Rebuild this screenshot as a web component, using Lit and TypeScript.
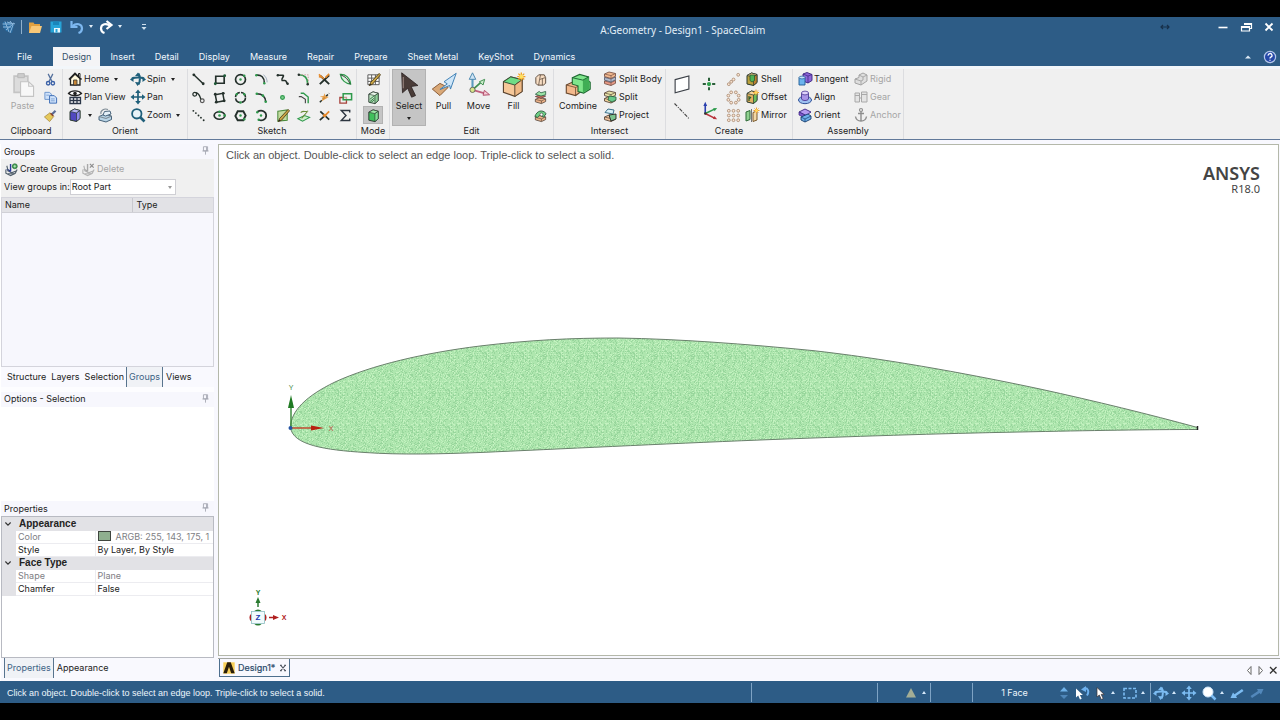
import { LitElement, html, svg, css } from "lit";
import { customElement, property } from "lit/decorators.js";
import { classMap } from "lit/directives/class-map.js";

const K = "#24302b";
const G = "#2f9a4c";
const T = "#1f5f7a";

const cube = (a: string, b: string, c: string) => svg`
  <path d="M3 4.500 7.500 2 13 3.500v8L9.500 14.500 3 13Z" fill=${b} stroke="#2a3a30" stroke-linejoin="round"/>
  <path d="M3 4.500 9.500 6 13 3.500 7.500 2Z" fill=${a} stroke="#2a3a30" stroke-width=".7"/>
  <path d="M9.500 6 13 3.500v8L9.500 14.500Z" fill=${c} stroke="#2a3a30" stroke-width=".7"/>`;

const slab = (y: number, fill: string, line = "#5b4a3c") => svg`
  <path d=${`M2.5 ${y + 2} 7 ${y} 13.5 ${y + 1.5}v2.8L9 ${y + 6.5} 2.5 ${y + 4.6}Z`} fill=${fill} stroke=${line} stroke-width=".9" stroke-linejoin="round"/>
  <path d=${`M2.5 ${y + 2} 9 ${y + 3.6} 13.5 ${y + 1.5}M9 ${y + 3.6}v2.7`} fill="none" stroke=${line} stroke-width=".7"/>`;

const dots = (pts: number[][], c = K, r = 1.1) =>
  pts.map(([x, y]) => svg`<circle cx=${x} cy=${y} r=${r} fill=${c}/>`);

const rings = (pts: number[][]) =>
  pts.map(([x, y]) => svg`<circle cx=${x} cy=${y} r="1.500" fill="#fbe6d4" stroke="#a98a72" stroke-width=".9"/>`);

const pencil = svg`<path d="M14 1.500 5 11l-1.500 3.500L7 13l8.500-10Z" fill="#c9a544" stroke="#4b3a18" stroke-width=".9"/><path d="m3.500 14.500 1-2.300 1.300 1.200Z" fill="#222"/>`;

const spark = (x: number, y: number) => svg`<path d=${`M${x - 3} ${y}h6M${x} ${y - 3}v6M${x - 2} ${y - 2}l4 4M${x + 2} ${y - 2}l-4 4`} stroke="#f0a030" stroke-width="1"/><circle cx=${x} cy=${y} r="1.500" fill="#ffd860"/>`;

const hand = (c: string, tail: string) => svg`
  <path d="M2 8v4l5 2.500 5-2.500 2-4M4 9l4 2.500 5-2" fill="none" stroke=${c} stroke-width="1.200"/>
  <path d="M7 2v8M7 10 3 7.500" fill="none" stroke=${tail} stroke-width="1.500"/><path d="M3 4l1.500 6M4 12.500h7" fill="none" stroke=${c} stroke-width="1.200"/>`;

const spinShape = (c: string) => svg`
  <path d="M2 7.500c3-1.500 9-1.500 12 0M8.500 2.500c1.800 3 1.800 8 0 11" fill="none" stroke=${c} stroke-width="2"/>
  <path d="M5 5 8 1.500 10.500 5ZM5 11l2.500 4 3-3.500Z" fill=${c}/><path d="m0 8.500 3.500-3v5.500ZM16 8.500l-3.500-3v5.500Z" fill=${c}/>`;

const panShape = (c: string) => svg`
  <path d="M8 3v10M3 8h10" stroke=${c} stroke-width="1.700"/>
  <path d="M8 .500 10.800 4H5.200ZM8 15.500 5.200 12h5.600ZM.500 8 4 5.200v5.600ZM15.500 8 12 10.800V5.200Z" fill=${c}/>`;

const ICONS: Record<string, unknown> = {
  app: svg`<path d="M2 3h8l3 3-2 8-6-2-3-4Z" fill="#2a6da3"/><path d="M1.500 5h9M2 8h8M4 2.500 8 13M9 2l3 4-3 8M5 11l7-6M6 3l7 2M12 4l2 1" fill="none" stroke="#8db8dc" stroke-width="1"/>`,
  open: svg`<path d="M2 3.500h4.500l1 1.500H13v9H2Z" fill="#e0a040"/><path d="M4.500 7H15l-2 7H2Z" fill="#f8c878"/>`,
  save: svg`<path d="M2.500 2.500h11v11h-11Z" fill="#27a4d8"/><path d="M5 2.500h6v3.500H5Z" fill="#1a86bb"/><path d="M6 9h6v4.500H6Z" fill="#e8f6fc"/><path d="M7.500 10h2v3.500h-2Z" fill="#27a4d8"/>`,
  undo: svg`<path d="M3.500 7c4-3.500 9.500-2 9.500 2.500 0 2.500-1.500 3.800-3.500 4.500" fill="none" stroke="#7db8f0" stroke-width="2.200"/><path d="M2.500 2v6h6" fill="none" stroke="#7db8f0" stroke-width="2.200"/>`,
  redo: svg`<path d="M12.500 7C8.500 3.500 3 5 3 9.500 3 12 4.500 13.300 6.500 14" fill="none" stroke="#fff" stroke-width="2.200"/><path d="M8.500 2 13.500 6 8.500 10" fill="none" stroke="#fff" stroke-width="2.200"/>`,
  more: svg`<path d="M6 5.500h4" stroke="#cfe0ee" stroke-width="1"/><path d="M5.500 8h5L8 11Z" fill="#cfe0ee"/>`,
  minimize: svg`<path d="M3.500 8.500h9" stroke="#fff" stroke-width="1.600"/>`,
  restore: svg`<path d="M6 4.500h7.500v5H12" fill="none" stroke="#fff" stroke-width="1.200"/><path d="M6 4h8v2H6Z" fill="#fff"/><path d="M3.500 7.500h8V12h-8Z" fill="#2d5c86" stroke="#fff" stroke-width="1.200"/><path d="M3 7h9v2H3Z" fill="#fff"/>`,
  close: svg`<path d="m4.500 4.500 7 7M11.500 4.500l-7 7" stroke="#fff" stroke-width="1.800"/>`,
  arrows: svg`<path d="M4 8h8M6 6 4 8l2 2M10 6l2 2-2 2" fill="none" stroke="#17304a" stroke-width="1.200"/>`,
  collapse: svg`<path d="M5 9.500 8 6.500l3 3Z" fill="#dce9f5"/>`,
  help: svg`<circle cx="8" cy="8" r="5.600" fill="#2548a8" stroke="#b5c8ea" stroke-width="1.200"/><path d="M6.200 6.600a1.900 1.900 0 1 1 2.600 1.600q-.8.400-.8 1.300M8 10.800v1" fill="none" stroke="#fff" stroke-width="1.300"/>`,
  paste: svg`<path d="M2.500 2.500h8.500v10H2.500Z" fill="#dcdcdc" stroke="#c4c4c4"/><path d="M4.800 1h4v2.500h-4Z" fill="#cccccc" stroke="#b8b8b8" stroke-width=".6"/><path d="M6.500 6h5l3 2.800v6.200h-8Z" fill="#f8f8f8" stroke="#c4c4c4" stroke-width=".7"/><path d="M11.500 6v2.800h3" fill="none" stroke="#c4c4c4" stroke-width=".7"/>`,
  cut: svg`<path d="M5.500 2 9.500 10M10.500 2 6.500 10" stroke="#54709c" stroke-width="1.300"/><circle cx="5.500" cy="12" r="1.800" fill="none" stroke="#3c62a8" stroke-width="1.500"/><circle cx="10.500" cy="12" r="1.800" fill="none" stroke="#3c62a8" stroke-width="1.500"/>`,
  copy: svg`<path d="M2 2.500h5l2 2V10H2Z" fill="#cfe2fa" stroke="#6b94cc"/><path d="M7 6h5l2.500 2.500v5.500H7Z" fill="#cfe2fa" stroke="#3a6bb4"/><path d="M8.500 9.500h4M8.500 11.500h4M3.500 5.500h3" stroke="#6b94cc" stroke-width=".8"/>`,
  brush: svg`<path d="m12.500 2 1.700 1.700-4 4L8.500 6Z" fill="#5a6c96"/><path d="m7.500 5 4 4-4.500 5.500L1.500 9.500Z" fill="#e6c95c" stroke="#9c7b2a" stroke-width=".7"/><path d="m8 5.500 3 3" stroke="#8a4632" stroke-width="1.600"/>`,
  home: svg`<path d="M3.500 7.500v6.500h9.500V7.500L8 3Z" fill="#fff8dc" stroke="#222" stroke-width="1.300"/><path d="M2 8.500 8 2.500l6.500 6" fill="none" stroke="#222" stroke-width="1.700"/><path d="M11.500 5V2.500h1.500V6" fill="none" stroke="#222"/><path d="M6.500 9h3.500v5H6.500Z" fill="#c98735" stroke="#333" stroke-width=".8"/>`,
  plan: svg`<path d="M1.500 4.500c3-3.500 10-3.500 13 0-3 3-10 3-13 0Z" fill="#fff" stroke="#222" stroke-width="1.300"/><circle cx="8" cy="4.500" r="1.800" fill="#222"/><path d="M3 8.500h10.500V14.500H3ZM6.500 8.500v6M10 8.500v6M3 11.500h10.500" fill="#fff" stroke="#2b3648" stroke-width="1.300"/>`,
  orientcube: cube("#b6b3f6", "#5148c0", "#8f89ec"),
  turn: svg`<path d="M2 9.500 8 7l6.500 2v3.500L9 15l-7-2Z" fill="#b8d4e6" stroke="#39566e" stroke-width=".9"/><path d="M6 8 7.500 4.500 13 4 14 7 8.500 9Z" fill="#e4f0f8" stroke="#39566e" stroke-width=".9"/><path d="M2 9.500 9 11.500l5.500-2.500M4 7c-1-3 3-6 7-4.500" fill="none" stroke="#7d8a94" stroke-width="1.100"/>`,
  spin: spinShape(T),
  pan: panShape(T),
  zoom: svg`<circle cx="6.800" cy="6.800" r="4.700" fill="#e8f3f8" stroke=${T} stroke-width="1.800"/><path d="m10 10 4.500 4.500" stroke=${T} stroke-width="2.600"/>`,

  line: svg`<path d="m3 3 10 9.500" stroke=${K} stroke-width="1.600"/>${dots([[3, 3], [13, 12.5]], K, 1.5)}`,
  rect: svg`<path d="M4 4.500h9v7.500H4Z" fill="none" stroke=${K} stroke-width="1.800"/>${dots([[3.500, 12.500], [13.500, 4]], "#1f5a38", 1.5)}`,
  circle: svg`<circle cx="8" cy="8" r="5.300" fill="none" stroke=${K} stroke-width="1.800"/>${dots([[8, 8], [12, 4]], G, 1.3)}`,
  tarc: svg`<path d="M2 3.500c6-1 9 2.500 9 8" fill="none" stroke=${K} stroke-width="1.700"/><path d="M10 3c3 2 4 5 4 8" fill="none" stroke="#9ab" stroke-width="1"/>${dots([[2.500, 3.500], [11, 12]], G, 1.3)}`,
  spline: svg`<path d="M3 3.500h5.500c2 .500-2.500 4-1 5.500h3c2 0 1.500 3 3 3.500" fill="none" stroke=${K} stroke-width="1.700"/>${dots([[3, 3.500], [13.500, 12.500]], K, 1.3)}`,
  corner: svg`<path d="M3 3c6 0 9.500 3.500 9.500 10" fill="none" stroke=${G} stroke-width="1.700"/><path d="M3 3h10v10" fill="none" stroke="#c88" stroke-width=".9" stroke-dasharray="1.500 1.500"/>${dots([[3, 3], [12.500, 13]], K, 1.3)}`,
  trim: svg`<path d="m3 13 10-9.500M3.500 4 13 13" stroke=${K} stroke-width="2"/><path d="M2 2.500 7.500 7.500M9 6l4-4M2 5l4 .500" stroke="#e58a2c" stroke-width="1.700"/>`,
  offset: svg`<path d="M2.500 2.500c5-.500 10.500 3.500 11 10.500-5-.500-10-4-11-10.500Z" fill="#dff5e2" stroke=${G} stroke-width="1.300"/><path d="M3 3c5 2 8 5 10 10" fill="none" stroke="#333"/>`,
  tline: svg`<circle cx="4" cy="4.500" r="2" fill="none" stroke=${K} stroke-width="1.300"/><circle cx="12" cy="11.500" r="2" fill="none" stroke="#555" stroke-width="1.300"/><path d="M5 2.800c4 .500 4.500 4 5.500 7" fill="none" stroke=${K} stroke-width="1.500"/>`,
  rect3: svg`<path d="M3.500 5 11.500 3.500l1.500 8-8 1.500Z" fill="none" stroke=${K} stroke-width="1.600"/>${dots([[3.500, 4.500], [12, 3.500], [13, 11.500], [4.500, 13]], K, 1.5)}`,
  circle3: svg`<circle cx="8" cy="8" r="5.300" fill="none" stroke=${K} stroke-width="1.700" stroke-dasharray="7 1.300"/>${dots([[4, 4.500], [12, 4.500], [8, 13.300]], G, 1.3)}`,
  sarc: svg`<path d="M3 4c6 0 9 3 9.500 8.500" fill="none" stroke=${K} stroke-width="1.700"/>${dots([[3, 4], [9.500, 6], [12.500, 12.500]], G, 1.4)}`,
  point: svg`<circle cx="8" cy="8" r="2" fill="#7fd08f" stroke=${G} stroke-width="1.300"/>`,
  offcurve: svg`<path d="M5 3.500h3l5 4V14" fill="none" stroke=${G} stroke-width="1.500"/><path d="M3 7h2.500L10 10v4" fill="none" stroke="#444" stroke-width="1.200"/>`,
  split: svg`<path d="m3 13 10-9.500" stroke=${K} stroke-width="1.600" stroke-dasharray="3 1.500"/><path d="m8 3.500 1 3 3.500 1-2.500 1.500-5 3 1-4-3-1 4-.500Z" fill="#e8983a" opacity=".9"/>`,
  bring: svg`<path d="M2 8h7v6H2Z" fill="none" stroke="#a8433c" stroke-width="1.400"/><path d="M5.500 4h9v6.500h-9Z" fill="#eaf7ec" fill-opacity=".5" stroke=${G} stroke-width="1.600"/>`,
  cline: svg`${dots([[2.5, 3], [5.2, 5.4], [8, 8], [10.6, 10.3], [13.5, 13]], K, 1)}`,
  ellipse: svg`<ellipse cx="8" cy="8" rx="5.700" ry="4" fill="none" stroke=${K} stroke-width="1.800"/>${dots([[8, 8], [13.500, 8], [8, 4]], G, 1.4)}`,
  polygon: svg`<path d="M5 3.500h6L13.500 8l-2.500 5H5L2.500 8.500Z" fill="none" stroke=${K} stroke-width="2"/>${dots([[8, 8], [12, 12]], G, 1.3)}`,
  parc: svg`<path d="M3.500 4c5-3 9.500 0 9.500 4s-4.500 6.500-8 4.500" fill="none" stroke=${K} stroke-width="1.800"/>${dots([[7.500, 8], [3.500, 4.500], [5, 12.500]], G, 1.3)}`,
  facecurve: svg`<path d="M3 3.500 13 2v11L3 14Z" fill="#c4dca0" stroke="#4b8a3c" stroke-width="1.100"/>${pencil}`,
  projsk: svg`<path d="M2 11.500 9 8l5.500 2L7 14Z" fill="#cfeecb" stroke=${G} stroke-width="1.100"/><path d="M5 5c3-3 5 0 8-2M6 11l6-7" fill="none" stroke="#6b8e3a" stroke-width="1.100"/>`,
  extend: svg`<path d="m3 13 6-5.500M3.500 3.500 13 12.500" stroke=${K} stroke-width="1.800"/><path d="m9 7.500 4-4" stroke="#e58a2c" stroke-width="1.800"/>${dots([[8, 8]], "#e58a2c", 1.8)}`,
  sigma: svg`<path d="M12.500 4.800V2.700h-9l5 5.300-5 5.300h9v-2.100" fill="none" stroke="#2c3540" stroke-width="1.500"/>`,

  sketchmode: svg`<path d="M2 3h12v10.500H2ZM2 6.500h12M2 10h12M6 3v10.500M10 3v10.500" fill="#fff" stroke="#555" stroke-width="1"/>${pencil}`,
  sectionmode: svg`${cube("#e8f6ea", "#bfe6c4", "#8ccf98")}<path d="m4 10 5-4M4 12.500l5-4M5 13.500l4-3" stroke="#2f7a40" stroke-width="1"/>`,
  solidmode: cube("#9be8a6", "#3fbf5b", "#7fe094"),

  select: svg`<path d="M3.500.500 13.500 8.300 9.300 8.900 12 14.500 9.600 15.500 7.200 10 4 12.800Z" fill="#4a3c38" stroke="#2a2020" stroke-width=".5"/><path d="M4.500 3v7" stroke="#8d7a74" stroke-width=".8"/>`,
  pull: svg`<path d="M.800 10.500 5.500 7l5 2.500-5 5Z" fill="#d9a877" stroke="#8a5a34" stroke-width=".6"/><path d="M15.500.800 8 6l2 1.300-4.500 3.500 6-2.500.500 2.200Z" fill="#cfe6f8" stroke="#3f7fb4" stroke-width=".6"/>`,
  move: svg`<path d="M4 11V3" stroke="#5b9cc0" stroke-width="1.300"/><path d="M4 .500 6 4.500H2Z" fill="#cfe4f4" stroke="#4a88b0" stroke-width=".6"/><path d="m4 11 5-4.500" stroke="#3f8f50" stroke-width="1.100"/><path d="m11.500 4.500-1 3.500-2.300-2Z" fill="#cdeccb" stroke="#3f8f50" stroke-width=".6"/><path d="m4 11 7 2" stroke="#c0607c" stroke-width="1.200"/><path d="m14.500 14-4 .300.800-3Z" fill="#f6c9d4" stroke="#b04a68" stroke-width=".6"/><circle cx="4" cy="11" r="1.600" fill="#d8e68a" stroke="#555" stroke-width=".5"/>`,
  fill: svg`<path d="M1.500 6 6 3l7 1.800V12L8.500 15 1.500 12.500Z" fill="#f6c89a" stroke="#5c4530" stroke-width=".7"/><path d="M1.500 6 6 3l7 1.800L8.500 8Z" fill="#6fdc86" stroke="#35533b" stroke-width=".6"/><path d="M8.500 8 13 4.800V12L8.500 15Z" fill="#efb985" stroke="#5c4530" stroke-width=".6"/><path d="M12.500.300v5M10 2.800h5M10.700 1l3.600 3.600M14.300 1l-3.600 3.600" stroke="#f0a020" stroke-width=".8"/><circle cx="12.500" cy="2.800" r="1.300" fill="#ffe060"/>`,
  edit1: svg`<path d="M3 6 6 3h6l1.500 3v6L11 14H5L3 12Z" fill="#f6dcc2" stroke="#5b4a3c"/><path d="m8 3-1 5 6-2M7 8l-1 6M10 7v7" fill="none" stroke="#5b4a3c" stroke-width=".8"/>`,
  edit2: svg`${slab(8, "#efb48a")}<path d="m2.500 7 5-2 6 1.500-5 2.500Z" fill="#c86a5a" stroke="#5b3a3c" stroke-width=".8"/><path d="m2.500 4.500 4-3 2 1.500 5-1.500v3.500l-5 1.500Z" fill="#9be3a6" stroke="#35664a" stroke-width=".9"/>`,
  edit3: svg`${slab(8, "#efb48a")}<path d="M2 9c2-6 8-8 12-3l-3 4c-2-3-5-2-6 0Z" fill="#6fcf86" stroke="#2e5f3f"/><circle cx="9" cy="7" r="1.600" fill="#fff" stroke="#333" stroke-width=".6"/>`,
  combine: svg`<path d="M.800 8 5 6l5 2v4l-3.500 2.500-5.700-1.500Z" fill="#f3b98c" stroke="#6b4a30" stroke-width=".7"/><path d="M.800 8 6.500 9.500v5M6.500 9.500 10 8" fill="none" stroke="#6b4a30" stroke-width=".5"/><path d="M4.500 3.500 9 1.500l5.500 1.500v2.500l1 .800v4.200l-4 2.500-3.500-1V8.500L4.500 7.500Z" fill="#7fe68c" stroke="#1f6b33" stroke-width=".7"/><path d="M11 5v7.800l4-2.300V6.300l-.500-3.300Z" fill="#3fae55"/><path d="m4.500 3.500 6.500 1.500 3.500-2" fill="none" stroke="#1f6b33" stroke-width=".6"/>`,
  splitbody: svg`${slab(8, "#e99a86", "#7a5548")}${slab(4.5, "#b5bccb", "#5c6478")}${slab(1, "#f2b98f", "#7a5548")}`,
  splitface: svg`${slab(7.5, "#f2d29a")}${slab(2, "#e8e2a8")}<path d="m7 7 7 1v3l-4 2-4-2Z" fill="#67c98a" stroke="#25583a" stroke-width=".8"/>`,
  project: svg`${slab(8, "#efc09a")}<path d="M3 5.500 6 2l6 1-1 4Z" fill="#d8f0f8" stroke="#3a6f88"/><path d="m7 8 7-1v5l-5 2Z" fill="#7ac48f" stroke="#222" stroke-width=".9"/>`,
  plane: svg`<path d="M2.500 4.500 13.500 1.500v10.500l-11 3Z" fill="#fff" stroke="#3c4148" stroke-width=".9"/>`,
  axis: svg`<path d="m2 2 12 12.500" stroke="#444" stroke-width=".9" stroke-dasharray="3 1 .800 1"/>`,
  cpoint: svg`<circle cx="8" cy="8" r="1.700" fill="#2ea04c"/><path d="M8 3v2.500M8 10.500V13M3 8h2.500M10.500 8H13" stroke="#2b5f3a" stroke-width="1.600"/>`,
  origin: svg`<path d="M5 10V2.500" stroke="#2a3fae" stroke-width="1.300"/><path d="M5 .500 6.500 4H3.500Z" fill="#2a3fae"/><path d="m5 10 7.500-3.500" stroke="#2b9a4a" stroke-width="1.200"/><path d="m14.500 5.500-2 2.600-1.200-2.300Z" fill="#2b9a4a"/><path d="m5 10 7 3.500" stroke="#b8323a" stroke-width="1.300"/><path d="m14.500 14.500-3.400-.200 1.200-2.300Z" fill="#b8323a"/><circle cx="5" cy="10" r="1" fill="#333"/>`,
  plinear: rings([[3, 13], [8, 8], [13, 3], [5.5, 10.5]]),
  pcirc: rings([[5.5, 2.5], [10.5, 2.5], [2.5, 6], [13.5, 6], [2.5, 10.5], [13.5, 10.5], [5.5, 13.5], [10.5, 13.5]]),
  pfill: rings([[3, 3], [8, 3], [13, 3], [3, 8], [8, 8], [13, 8], [3, 13], [8, 13], [13, 13]]),
  shell: svg`${cube("#f0c48a", "#b9a03c", "#b97f2e")}<path d="M6 4h4.500v5.500L8 11 6 9.500Z" fill="#4db356" stroke="#2b5c2f" stroke-width=".8"/>`,
  offsetb: svg`${cube("#f6d9a0", "#e2b060", "#6bbf5a")}<path d="M5 7v5M7 8l-2 2" stroke="#2b5c2f" stroke-width="1.200"/>${spark(12, 3.5)}`,
  mirror: svg`<path d="M2 5 6 3.500v9L2 14Z" fill="#8fd190" stroke="#2f6b38" stroke-width="1"/><path d="m9 5.500 4-1.500v9l-4 1.500Z" fill="#f2d7a6" stroke="#7b5a2c" stroke-width="1"/><path d="M7.500 2v13" stroke="#555" stroke-width=".8"/>${spark(12.5, 3.5)}`,
  tangent: svg`<path d="M6 3 10 1.500l5 2v6L11 12 6 10Z" fill="#8c66d8" stroke="#3b2480" stroke-width=".9"/><path d="m6 3 5 2 4-1.500M11 5v7" fill="none" stroke="#3b2480" stroke-width=".7"/><path d="M2 6.500h6V14H2Z" fill="#6db4ee" stroke="#1f5c94" stroke-width=".9"/><ellipse cx="5" cy="6.500" rx="3" ry="1.400" fill="#c4e2fa" stroke="#1f5c94" stroke-width=".7"/>`,
  align: svg`<ellipse cx="8" cy="11" rx="6.500" ry="3.700" fill="#9dc0f0" stroke="#2d4f96" stroke-width="1"/><path d="M4.500 4v6c1 2 6 2 7 0V4Z" fill="#a994e6" stroke="#4b3a94" stroke-width=".9"/><ellipse cx="8" cy="4" rx="3.500" ry="1.900" fill="#ded2fa" stroke="#4b3a94" stroke-width=".8"/>`,
  orient: svg`<path d="m2 5 6-3 6 3-5 3.500Z" fill="#b59af0" stroke="#3b2480" stroke-width=".9"/><path d="M2 5v3l6 3 1-2.500Z" fill="#7c58cc" stroke="#3b2480" stroke-width=".7"/><path d="m4 10 7-3 3 2v3l-6 3-4-2Z" fill="#6db0ea" stroke="#173e6e" stroke-width=".9"/><path d="m4 10 4 2 6-3M8 12v3" fill="none" stroke="#173e6e" stroke-width=".7"/>`,
  rigid: svg`<path d="M2 8 6 6.500 6 4l4-2 4 2v6l-6 4-6-2Z" fill="#dedede" stroke="#a3a3a3"/><path d="m6 4 4 2 4-2M2 8l6 2v4M8 10l2-1V6" fill="none" stroke="#a3a3a3" stroke-width=".9"/>`,
  gear: svg`<path d="M2 4h4.500v9H2ZM8.500 3H14v10H8.500Z" fill="#e4e4e4" stroke="#a8a8a8"/><path d="M2 6.500h4.500M8.500 5.500H14M6.500 9h2" stroke="#a8a8a8"/>`,
  anchor: svg`<circle cx="8" cy="3" r="1.500" fill="none" stroke="#8d8d8d" stroke-width="1.200"/><path d="M8 4.500V14M5 6.500h6M2.500 9.500C3 12.500 5.500 14 8 14s5-1.500 5.500-4.500" fill="none" stroke="#8d8d8d" stroke-width="1.400"/>`,

  create: svg`${hand("#51606c", "#2a3b9a")}<circle cx="11.500" cy="4.500" r="2.700" fill="#3a9a4a" stroke="#226030" stroke-width=".6"/><path d="M10 4.500h3M11.500 3v3" stroke="#d4f2d8" stroke-width=".8"/>`,
  delete: svg`${hand("#b4b4b4", "#a8a8a8")}<path d="m9.500 2 4 4M13.500 2l-4 4" stroke="#8d8d8d" stroke-width="1.300"/>`,
  pin: svg`<path d="M5 2.500h6v6H5ZM9.500 3v5.500M3.500 8.700h9M8 9v5" fill="none" stroke="#9fa1ac" stroke-width="1.200"/>`,
  chevron: svg`<path d="m4.500 6 3.500 3.500L11.500 6" fill="none" stroke="#333" stroke-width="1.500"/>`,
  doc: svg`<path d="M1.500 1.500h13v13h-13Z" fill="#f8cf58"/><path d="M1.500 14 6 1.500h4L14.500 14h-4L8 6.500 5.500 14Z" fill="#2a1e0c"/>`,
  tabx: svg`<path d="m5 4.500 6 7M11 4.500l-6 7M4 4.500h2.500M9.500 4.500H12M4 11.500h2.500M9.500 11.500H12" stroke="#555a66" stroke-width="1.400"/>`,
  prev: svg`<path d="m10 4.500-3.500 4 3.500 4Z" fill="#fff" stroke="#666"/>`,
  next: svg`<path d="m6 4.500 3.500 4-3.500 4Z" fill="#fff" stroke="#666"/>`,
  closedoc: svg`<path d="m5 5 6.500 6.500M11.500 5 5 11.500" stroke="#333" stroke-width="1.300"/>`,
  warn: svg`<path d="M8 3 13 12.500H3Z" fill="#a3ad95"/>`,
  updown: svg`<path d="m8 2 4 4.500H4Z" fill="#6fb1e8"/><path d="m8 14 4-4H4Z" fill="#4f86b8"/>`,
  back: svg`<path d="M10 3.500c4-1 5.500 3 3 7" fill="none" stroke="#6cb0ee" stroke-width="2"/><path d="M7 4.500 12 1v6Z" fill="#6cb0ee"/><path d="M2 3.500v9l2.200-2 1.800 4 1.700-.800-1.800-3.700h3Z" fill="#fff"/>`,
  cursor: svg`<path d="M5 2.500v9.500l2.300-2 2 4.500 1.900-.900-2-4.200h3Z" fill="#fff" stroke="#3b3030" stroke-width=".7"/>`,
  marquee: svg`<path d="M2 3.500h12v9.500H2Z" fill="none" stroke="#7cbcf2" stroke-width="1.600" stroke-dasharray="3 1.500"/>`,
  sspin: spinShape("#7cbcf2"),
  span: panShape("#7cbcf2"),
  szoom: svg`<circle cx="7" cy="7" r="5" fill="#fff" stroke="#cfe6fb"/><path d="m10.500 10.500 4 4" stroke="#7cbcf2" stroke-width="2.500"/>`,
  sback: svg`<path d="M1.500 13 4 7.500l1.500 1.700L13 4l1.500 2-7.500 5 1 2Z" fill="#7cbcf2"/>`,
  sfwd: svg`<path d="M14.500 4 12 9.500 10.500 8 3 13l-1.500-2L9 6 8 4Z" fill="#5288bb"/>`,
};

@customElement("ui-icon")
export class UiIcon extends LitElement {
  @property() name = "";
  static styles = css`
    :host { display: inline-flex; flex: none; width: 16px; height: 16px; }
    svg { width: 100%; height: 100%; display: block; }
  `;
  render() {
    return html`<svg viewBox="0 0 16 16" aria-hidden="true">${ICONS[this.name]}</svg>`;
  }
}

interface Tool { icon: string; label?: string; caret?: boolean; off?: boolean; }

const TABS = ["Insert", "Detail", "Display", "Measure", "Repair", "Prepare", "Sheet Metal", "KeyShot", "Dynamics"];
const SKETCH = [
  "line", "rect", "circle", "tarc", "spline", "corner", "trim", "offset",
  "tline", "rect3", "circle3", "sarc", "point", "offcurve", "split", "bring",
  "cline", "ellipse", "polygon", "parc", "facecurve", "projsk", "extend", "sigma",
];
const HINT = "Click an object. Double-click to select an edge loop. Triple-click to select a solid.";

/* Speckles of the facetted face, repeated as a tile. */
const TILE = 37;
const SPECKS = (() => {
  let seed = 11;
  const next = () => (seed = (seed * 1103515245 + 12345) % 2147483648) / 2147483648;
  const part = () => Array.from({ length: 330 }, () => `M${Math.floor(next() * TILE)} ${Math.floor(next() * TILE)}h1v1h-1z`).join("");
  return [part(), part()];
})();

@customElement("app-root")
export class AppRoot extends LitElement {
  static styles = css`
    :host {
      display: flex; flex-direction: column; height: 100vh; box-sizing: border-box;
      padding: 17px 0; background: #000; color: #222;
      font: 9px/12px Inter, "Liberation Sans", sans-serif;
    }
    * { box-sizing: border-box; }
    button, select { font: inherit; color: inherit; background: none; border: 0; padding: 0; margin: 0; }
    button { display: inline-flex; align-items: center; white-space: nowrap; }
    .caret { flex: none; border: 2px solid transparent; border-top: 3px solid currentColor; border-bottom: 0; width: 0; height: 0; }
    .up { transform: rotate(180deg); }
    .grow { flex: 1; }

    .title { display: grid; grid-template-columns: 7fr auto 6fr; align-items: center; height: 26px; flex: none; background: #2d5c86; color: #e2eef8; }
    .quick { display: flex; align-items: center; padding-left: 1px; height: 19px; align-self: start; }
    .quick .rule { width: 1px; height: 14px; background: #8fb0cc; margin: 0 5px 0 4px; }
    .quick button { margin-right: 5px; gap: 4px; }
    .quick .more { margin-left: 9px; }
    .name { font: 10px/26px "Noto Sans", sans-serif; }
    .window { display: flex; justify-content: flex-end; align-items: center; gap: 7px; padding-right: 3px; height: 20px; align-self: start; }
    .window .resize { margin-right: 35px; }

    .tabs { display: flex; align-items: flex-end; height: 23px; flex: none; background: #2d5c86; color: #f2f8fd; padding-right: 2px; }
    .tabs button { height: 19px; padding: 0 10px; }
    .tabs .file { padding: 0 20px 0 17px; margin-right: 1px; }
    .tabs .active { background: #f4f4f6; color: #35516b; padding: 0 9px; }
    .tabs .tool { padding: 0; margin-left: 6px; }

    .ribbon { display: flex; flex: none; height: 74px; background: #f0f0f0; border-top: 3px solid #f2f6fa; border-bottom: 1px solid #61799a; }
    .group { display: flex; flex-direction: column; border-right: 1px solid #dcdde0; }
    .items { display: flex; height: 55px; padding-top: 1px; }
    .caption { text-align: center; line-height: 13px; }
    .rows { display: grid; grid-template-rows: repeat(3, 18px); align-items: center; }
    .rows button { gap: 1px; }
    .rows .caret { margin-left: 4px; }
    .grid { display: grid; grid-template-rows: repeat(3, 18px); place-items: center; }
    .grid ui-icon { width: 15px; height: 15px; }
    .off { color: #a5a5a5; }
    .big { flex-direction: column; height: 54px; gap: 2px; padding-top: 2px; justify-content: flex-start; }
    .big ui-icon { width: 26px; height: 26px; }
    .big .caret { margin-top: 3px; }
    .pressed { background: #c5c5c5; box-shadow: inset 0 0 0 1px #b2b2b2; }
    .clip .items { padding-left: 4px; }
    .clip .big { width: 37px; }
    .clip .grid { width: 18px; margin-right: 3px; }
    .view .items { padding-left: 4px; }
    .view .rows { grid-template-columns: 63px 57px; }
    .view .pair { display: flex; align-items: center; }
    .view .pair button:last-child { margin-left: 5px; }
    .sketch .grid { grid-template-columns: repeat(8, 21px); }
    .mode .grid { width: 32px; }
    .mode button { width: 20px; height: 18px; justify-content: center; }
    .edit .items { padding-left: 2px; }
    .edit .big { width: 35px; }
    .edit .pressed { width: 34px; height: 57px; margin-top: -1px; padding-top: 3px; }
    .edit .grid { width: 19px; margin-right: 3px; }
    .inter .big { width: 48px; }
    .inter .rows { width: 63px; }
    .create .items { padding-left: 2px; }
    .create .pairs { display: grid; grid-template: repeat(2, 27px) / 27px 28px; place-items: center; }
    .create .pairs ui-icon { width: 20px; height: 20px; }
    .create .grid { width: 21px; }
    .create .rows { width: 48px; }
    .assy .items { padding-left: 4px; }
    .assy .rows { grid-template-columns: 56px 50px; }

    .body { display: flex; flex: 1; min-height: 0; background: #f8f8fe; padding-top: 4px; }
    .side { display: flex; flex-direction: column; width: 214px; flex: none; padding-left: 1px; background: #fff; }
    .head { display: flex; align-items: center; justify-content: space-between; height: 15px; flex: none; background: #f7f7fd; padding: 0 3px; }
    .head ui-icon { width: 11px; height: 11px; margin-bottom: 2px; }
    .tools { background: #f0f0f0; padding: 1px 3px; flex: none; }
    .tools div { display: flex; align-items: center; height: 18px; }
    .tools button { gap: 1px; margin-right: 4px; }
    .tools ui-icon { width: 15px; height: 15px; }
    .pick { display: block; position: relative; width: 106px; }
    .pick select { width: 100%; height: 16px; border: 1px solid #cfcfd4; background: #fff; appearance: none; padding: 0 1px; }
    .pick .caret { position: absolute; right: 4px; top: 7px; color: #999; }
    .list { flex: 1 1 169px; min-height: 0; border: 1px solid #d4d4dc; background: #f7f7fd; }
    table { border-collapse: collapse; width: 100%; table-layout: fixed; }
    th, td { padding: 0; font-weight: normal; text-align: left; white-space: nowrap; overflow: hidden; }
    .list th { height: 14px; background: #e2e2e6; padding-left: 3px; border-bottom: 1px solid #d0d0d6; }
    .list th + th { width: 81px; border-left: 1px solid #c8c8ce; padding-left: 4px; }
    .strip { display: flex; height: 20px; flex: none; background: #f9f9fe; padding-left: 3px; align-items: stretch; }
    .strip button { padding: 0 2px 0 3px; }
    .strip .on { border: solid #58748e; border-width: 0 1px; background: #f0f2f6; color: #3c6384; padding: 0 2px; }
    .gap { height: 5px; flex: none; background: #fdfdff; }
    .end { height: 3px; background: #f9f9fe; }
    .blank { flex: 1 1 94px; background: #fff; }
    .props { flex: 1 1 141px; min-height: 0; border: 1px solid #b8bac2; overflow: hidden; background: #fff; }
    .props th, .props td { height: 13px; line-height: 12px; border-bottom: 1px solid #ececf0; padding-left: 2px; }
    .props .mark { width: 14px; background: #e2e2e6; border-bottom-color: #e2e2e6; padding: 0; }
    .props .mark ui-icon { width: 12px; height: 12px; vertical-align: top; }
    .props .key { width: 79px; border-right: 1px solid #ececf0; }
    .props .section th { background: #e2e2e6; border-bottom-color: #e2e2e6; font: bold 10px/12px "Liberation Sans", sans-serif; padding-left: 3px; }
    .props .muted { color: #7e7e84; }
    .swatch { display: inline-block; width: 13px; height: 10px; background: #8faf8f; border: 1px solid #3f463f; margin-right: 5px; vertical-align: -1px; }

    .main { display: flex; flex-direction: column; flex: 1; min-width: 0; padding-left: 4px; }
    .canvas { flex: 1; min-height: 0; position: relative; background: #fff; border: 1px solid #b4b8aa; margin-right: 1px; overflow: hidden; }
    .canvas svg { display: block; width: 100%; height: 100%; }
    .hint { position: absolute; left: 7px; top: 3px; font: 11px/14px "Liberation Sans", sans-serif; color: #555; }
    .logo { position: absolute; right: 18px; top: 20px; text-align: right; color: #444; font-family: "Noto Sans", sans-serif; }
    .logo b { display: block; font-size: 18px; line-height: 17px; font-weight: 600; }
    .logo span { display: block; font-size: 11px; line-height: 13px; }
    .docs { display: flex; align-items: center; height: 23px; flex: none; margin-top: 2px; border-top: 1px solid #a4a6a0; padding-right: 1px; }
    .doc { display: flex; align-items: center; height: 18px; margin: 0 0 4px 1px; border: 1px solid #4d6f8e; border-top: 0; padding: 0 0 0 2px; gap: 2px; color: #2a4a6a; -webkit-text-stroke: 0.2px; }
    .docs > button { margin: 0 -2px; }
    .doc ui-icon { width: 14px; height: 14px; }
    .doc button ui-icon { width: 12px; height: 12px; }

    .status { display: flex; align-items: center; height: 22px; flex: none; background: #2d5c86; color: #eef6fc; padding: 1px 15px 0 7px; }
    .message { font: 9px/12px "Liberation Sans", sans-serif; }
    .cell { display: flex; align-items: center; justify-content: center; align-self: stretch; margin: 1px 0; border-left: 1px solid #7ea3c4; }
    .status button { color: #d6e9fa; gap: 3px; }
    .w1 { width: 126px; } .w2 { width: 53px; justify-content: flex-end; padding-right: 4px; } .w3 { width: 42px; }
    .w4 { width: 84px; }
    .sel { display: flex; gap: 2px; align-items: center; width: 94px; }
    .sel .menu { margin-right: 5px; }
    .nav { justify-content: flex-start; gap: 4px; padding-left: 2px; }
    .nav .menu { margin-right: 1px; }
  `;

  private tool(t: Tool) {
    return html`<button type="button" class=${classMap({ off: !!t.off })} ?disabled=${t.off}>
      <ui-icon name=${t.icon}></ui-icon>${t.label ? html`<span>${t.label}</span>` : ""}${t.caret ? html`<i class="caret"></i>` : ""}
    </button>`;
  }

  private mini(name: string, label = name) {
    return html`<button type="button" aria-label=${label}><ui-icon name=${name}></ui-icon></button>`;
  }

  private menu(name: string, label: string) {
    return html`<button type="button" class="menu" aria-label=${label}><ui-icon name=${name}></ui-icon><i class="caret up"></i></button>`;
  }

  private big(icon: string, label: string, cls = "") {
    return html`<button type="button" class="big ${cls}">
      <ui-icon name=${icon}></ui-icon><span>${label}</span>${cls === "pressed" ? html`<i class="caret"></i>` : ""}
    </button>`;
  }

  private group(cls: string, caption: string, content: unknown) {
    return html`<section class="group ${cls}"><div class="items">${content}</div><div class="caption">${caption}</div></section>`;
  }

  private head(text: string) {
    return html`<div class="head"><span>${text}</span>${this.mini("pin", `Pin ${text}`)}</div>`;
  }

  private ribbon() {
    return html`<div class="ribbon">
      ${this.group("clip", "Clipboard", html`${this.big("paste", "Paste", "off")}
        <div class="grid">${["cut", "copy", "brush"].map((n) => this.mini(n))}</div>`)}
      ${this.group("view", "Orient", html`<div class="rows">
        ${this.tool({ icon: "home", label: "Home", caret: true })}
        ${this.tool({ icon: "spin", label: "Spin", caret: true })}
        ${this.tool({ icon: "plan", label: "Plan View" })}
        ${this.tool({ icon: "pan", label: "Pan" })}
        <div class="pair">${this.tool({ icon: "orientcube", caret: true })}${this.mini("turn")}</div>
        ${this.tool({ icon: "zoom", label: "Zoom", caret: true })}
      </div>`)}
      ${this.group("sketch", "Sketch", html`<div class="grid">${SKETCH.map((n) => this.mini(n))}</div>`)}
      ${this.group("mode", "Mode", html`<div class="grid">
        ${this.mini("sketchmode")}${this.mini("sectionmode")}
        <button type="button" class="pressed" aria-label="3D mode"><ui-icon name="solidmode"></ui-icon></button>
      </div>`)}
      ${this.group("edit", "Edit", html`${this.big("select", "Select", "pressed")}${this.big("pull", "Pull")}
        ${this.big("move", "Move")}${this.big("fill", "Fill")}
        <div class="grid">${["edit1", "edit2", "edit3"].map((n) => this.mini(n))}</div>`)}
      ${this.group("inter", "Intersect", html`${this.big("combine", "Combine")}<div class="rows">
        ${this.tool({ icon: "splitbody", label: "Split Body" })}
        ${this.tool({ icon: "splitface", label: "Split" })}
        ${this.tool({ icon: "project", label: "Project" })}</div>`)}
      ${this.group("create", "Create", html`
        <div class="pairs">${["plane", "cpoint", "axis", "origin"].map((n) => this.mini(n))}</div>
        <div class="grid">${["plinear", "pcirc", "pfill"].map((n) => this.mini(n))}</div>
        <div class="rows">
          ${this.tool({ icon: "shell", label: "Shell" })}
          ${this.tool({ icon: "offsetb", label: "Offset" })}
          ${this.tool({ icon: "mirror", label: "Mirror" })}</div>`)}
      ${this.group("assy", "Assembly", html`<div class="rows">
        ${this.tool({ icon: "tangent", label: "Tangent" })}
        ${this.tool({ icon: "rigid", label: "Rigid", off: true })}
        ${this.tool({ icon: "align", label: "Align" })}
        ${this.tool({ icon: "gear", label: "Gear", off: true })}
        ${this.tool({ icon: "orient", label: "Orient" })}
        ${this.tool({ icon: "anchor", label: "Anchor", off: true })}</div>`)}
    </div>`;
  }

  private prop(key: string, value: unknown, muted = false) {
    return html`<tr class=${classMap({ muted })}><td class="mark"></td><td class="key">${key}</td><td>${value}</td></tr>`;
  }

  private section(label: string) {
    return html`<tr class="section"><td class="mark"><ui-icon name="chevron"></ui-icon></td><th colspan="2">${label}</th></tr>`;
  }

  private side() {
    return html`<aside class="side">
      ${this.head("Groups")}
      <div class="tools">
        <div>${this.tool({ icon: "create", label: "Create Group" })}${this.tool({ icon: "delete", label: "Delete", off: true })}</div>
        <div><label for="root">View groups in:</label>
          <span class="pick"><select id="root"><option>Root Part</option></select><i class="caret"></i></span></div>
      </div>
      <div class="list"><table><thead><tr><th>Name</th><th>Type</th></tr></thead></table></div>
      <div class="strip">
        ${["Structure", "Layers", "Selection", "Groups", "Views"].map(
          (t) => html`<button type="button" class=${classMap({ on: t === "Groups" })}>${t}</button>`)}
      </div>
      <div class="gap"></div>
      ${this.head("Options - Selection")}
      <div class="blank"></div>
      ${this.head("Properties")}
      <div class="props"><table>
        <colgroup><col class="mark"><col class="key"><col></colgroup>
        <tbody>
          ${this.section("Appearance")}
          ${this.prop("Color", html`<i class="swatch"></i>ARGB: 255, 143, 175, 1`, true)}
          ${this.prop("Style", "By Layer, By Style")}
          ${this.section("Face Type")}
          ${this.prop("Shape", "Plane", true)}
          ${this.prop("Chamfer", "False")}
        </tbody></table></div>
      <div class="strip"><button type="button" class="on">Properties</button><button type="button">Appearance</button></div>
      <div class="gap end"></div>
    </aside>`;
  }

  private scene() {
    return html`<svg viewBox="219 145 1059 510" role="img" aria-label="Airfoil face">
      <defs><pattern id="mesh" width=${TILE} height=${TILE} patternUnits="userSpaceOnUse">
        <rect width=${TILE} height=${TILE} fill="#aee6ae"/>
        <path d=${SPECKS[0]} fill="#c4f2c0"/><path d=${SPECKS[1]} fill="#98d69c"/>
      </pattern></defs>
      <path d="M290.500 427C291 411 306 396 335 382C372 365 424 353 480 346C530 340 570 338 618 338C680 339 745 344 812 350.500C880 358 960 372 1040 389C1095 401 1150 414.500 1197.500 427.500V429.500C1150 429.500 1090 430.500 1020 432C940 433.500 850 436.500 760 440C660 444 560 449 480 452.500C440 454 400 455 365 452.500C325 450 292 445 290.500 427Z"
        fill="url(#mesh)" stroke="#6a806c" stroke-width="1"/>
      <path d="M1197.500 426v4" stroke="#222" stroke-width="1.500"/>
      <path d="M291 427V405" stroke="#3c8c3c" stroke-width="1.500"/><path d="m291 395 3 13h-6Z" fill="#1f7a22"/>
      <path d="M291 428h22" stroke="#c04a30" stroke-width="1.500"/><path d="m324 428-13 2.500v-5Z" fill="#b81f10"/>
      <circle cx="290.500" cy="428" r="2" fill="#2454a4"/>
      <g font-family="Liberation Sans, sans-serif" font-size="7" text-anchor="middle">
        <text x="291" y="390" fill="#4a8a4a">Y</text><text x="331" y="431" fill="#b84838">X</text>
        <g font-weight="bold"><text x="258" y="595" fill="#2a7a30">Y</text><text x="284" y="620" fill="#b02020">X</text></g>
      </g>
      <path d="M258 607v-8" stroke="#2a7a30" stroke-width="1.500"/><path d="m258 597 2.500 6h-5Z" fill="#2a7a30"/>
      <path d="M269 617.500h7" stroke="#b02020" stroke-width="1.500"/><path d="m279 617.500-6 2.500v-5Z" fill="#b02020"/>
      <path d="M254.500 611a4 3 0 0 1 7 0ZM254.500 624a4 3 0 0 0 7 0Z" fill="#2a7a30"/>
      <path d="M251 614a3 4 0 0 0 0 7ZM265 614a3 4 0 0 1 0 7Z" fill="#b02020"/>
      <rect x="251.500" y="611.500" width="13" height="12" fill="#f2fbfd" stroke="#8cbcc0" stroke-width=".8"/>
      <text x="258" y="620" fill="#2038b0" font-family="Liberation Sans, sans-serif" font-size="8" font-weight="bold" text-anchor="middle">Z</text>
    </svg>`;
  }

  render() {
    return html`
      <header class="title">
        <div class="quick">
          <ui-icon name="app"></ui-icon><span class="rule"></span>
          ${this.mini("open")}${this.mini("save")}
          ${this.tool({ icon: "undo", caret: true })}${this.tool({ icon: "redo", caret: true })}
          <button type="button" class="more" aria-label="Customize"><ui-icon name="more"></ui-icon></button>
        </div>
        <div class="name">A:Geometry - Design1 - SpaceClaim</div>
        <div class="window"><ui-icon class="resize" name="arrows"></ui-icon>${["minimize", "restore", "close"].map((n) => this.mini(n))}</div>
      </header>
      <nav class="tabs">
        <button type="button" class="file">File</button><button type="button" class="active">Design</button>
        ${TABS.map((t) => html`<button type="button">${t}</button>`)}
        <span class="grow"></span>
        <button type="button" class="tool" aria-label="Collapse"><ui-icon name="collapse"></ui-icon></button>
        <button type="button" class="tool" aria-label="Help"><ui-icon name="help"></ui-icon></button>
      </nav>
      ${this.ribbon()}
      <div class="body">
        ${this.side()}
        <main class="main">
          <div class="canvas">${this.scene()}
            <div class="hint">${HINT}</div>
            <div class="logo"><b>ANSYS</b><span>R18.0</span></div>
          </div>
          <div class="docs">
            <div class="doc"><ui-icon name="doc"></ui-icon><span>Design1*</span>${this.mini("tabx", "Close tab")}</div>
            <span class="grow"></span>${["prev", "next", "closedoc"].map((n) => this.mini(n))}
          </div>
        </main>
      </div>
      <footer class="status">
        <span class="message">${HINT}</span><span class="grow"></span>
        <div class="cell w1"></div>
        <div class="cell w2">${this.menu("warn", "Warnings")}</div>
        <div class="cell w3"></div>
        <div class="cell w4">1 Face</div>
        <div class="sel">${this.mini("updown")}${this.mini("back")}${this.menu("cursor", "Select")}${this.menu("marquee", "Box select")}</div>
        <div class="cell nav">${this.menu("sspin", "Spin")}${this.mini("span", "Pan")}${this.menu("szoom", "Zoom")}${this.mini("sback")}${this.mini("sfwd")}</div>
      </footer>`;
  }
}
